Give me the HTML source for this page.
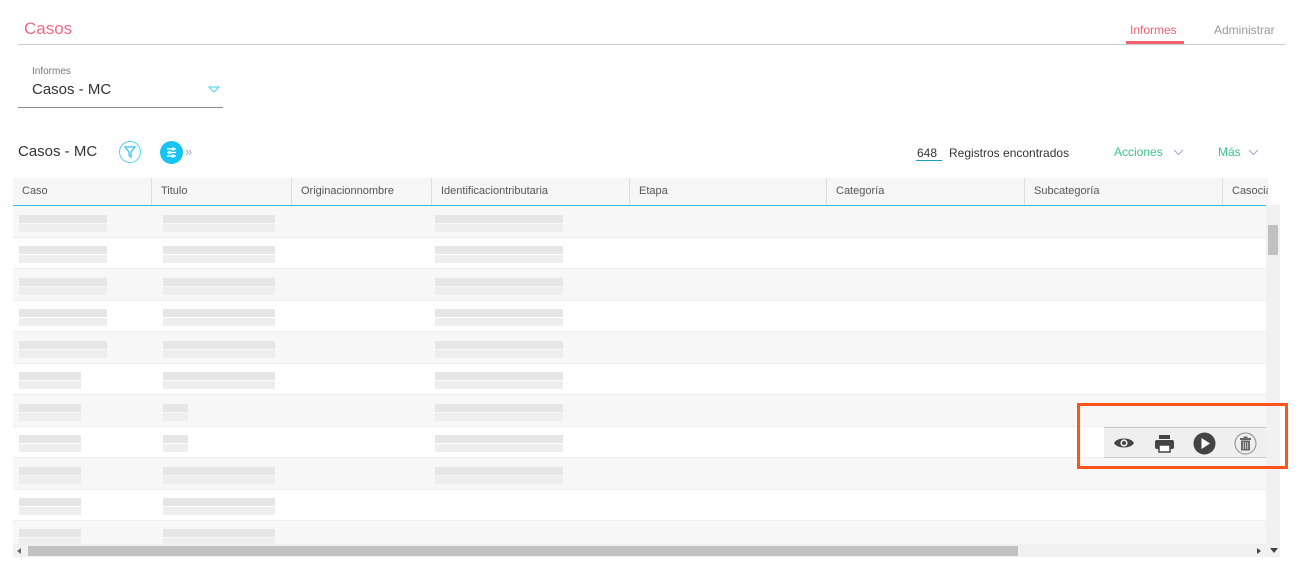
<!DOCTYPE html>
<html><head><meta charset="utf-8"><style>
*{box-sizing:border-box;margin:0;padding:0}
body{width:1313px;height:574px;background:#fff;font-family:"Liberation Sans",sans-serif;position:relative;overflow:hidden;color:#333}
.a{position:absolute}
.hd{position:absolute;top:178px;height:27px;font-size:11px;color:#555;padding:7px 0 0 9px;border-left:1px solid #ddd;background:#f6f6f6}
.row{position:absolute;left:13px;width:1253px;height:31.5px;border-bottom:1px solid #eee}
.bl{position:absolute;height:8px;background:#e6e6e6}
</style></head><body>
<div class="a" style="left:24px;top:19px;font-size:17px;color:#f06a8a">Casos</div>
<div class="a" style="left:18px;top:44px;width:1267px;height:1px;background:#ccc"></div>
<div class="a" style="left:1130px;top:23px;font-size:12px;color:#f0606e">Informes</div>
<div class="a" style="left:1126px;top:41px;width:58px;height:3px;background:#f0606e"></div>
<div class="a" style="left:1214px;top:23px;font-size:12px;color:#999">Administrar</div>

<div class="a" style="left:32px;top:66px;font-size:10px;color:#777">Informes</div>
<div class="a" style="left:32px;top:81px;font-size:15px;color:#333">Casos - MC</div>
<svg class="a" style="left:208px;top:86px" width="12" height="8" viewBox="0 0 12 8"><path d="M1 1h10L6 6z" fill="none" stroke="#4fd0f0" stroke-width="1"/></svg>
<div class="a" style="left:18px;top:107px;width:205px;height:1px;background:#888"></div>

<div class="a" style="left:18px;top:143px;font-size:15px;color:#333">Casos - MC</div>
<div class="a" style="left:119px;top:141px;width:22px;height:22px;border:1px solid #4fd0f0;border-radius:50%"></div>
<svg class="a" style="left:123px;top:145px" width="14" height="14" viewBox="0 0 14 14"><path d="M2 2h10L8 7v5L6 10V7z" fill="none" stroke="#2bc4ec" stroke-width="1.2"/></svg>
<div class="a" style="left:160px;top:141px;width:23px;height:23px;background:#16c3f2;border-radius:50%"></div>
<svg class="a" style="left:165px;top:146px" width="13" height="13" viewBox="0 0 13 13" stroke="#fff" stroke-width="1.2"><path d="M2 3h9M2 6.5h9M2 10h9"/><circle cx="8" cy="3" r="1" fill="#16c3f2"/><circle cx="4.5" cy="6.5" r="1" fill="#16c3f2"/><circle cx="8" cy="10" r="1" fill="#16c3f2"/></svg>
<div class="a" style="left:185px;top:144px;font-size:13px;color:#aaa">»</div>

<div class="a" style="left:917px;top:146px;font-size:12px;color:#333">648</div>
<div class="a" style="left:916px;top:160px;width:26px;height:1px;background:#1aa0c8"></div>
<div class="a" style="left:949px;top:146px;font-size:12px;color:#333">Registros encontrados</div>
<div class="a" style="left:1114px;top:145px;font-size:12px;color:#3cc48a">Acciones</div>
<svg class="a" style="left:1173px;top:149px" width="11" height="7" viewBox="0 0 11 7"><path d="M1 1l4.5 4.5L10 1" fill="none" stroke="#9ac" stroke-width="1"/></svg>
<div class="a" style="left:1218px;top:145px;font-size:12px;color:#3cc48a">Más</div>
<svg class="a" style="left:1248px;top:149px" width="11" height="7" viewBox="0 0 11 7"><path d="M1 1l4.5 4.5L10 1" fill="none" stroke="#9ac" stroke-width="1"/></svg>

<div class="hd" style="left:13px;width:138px;border-left:none">Caso</div>
<div class="hd" style="left:151px;width:140px">Titulo</div>
<div class="hd" style="left:291px;width:140px">Originacionnombre</div>
<div class="hd" style="left:431px;width:198px">Identificaciontributaria</div>
<div class="hd" style="left:629px;width:197px">Etapa</div>
<div class="hd" style="left:826px;width:198px">Categoría</div>
<div class="hd" style="left:1024px;width:198px">Subcategoría</div>
<div class="hd" style="left:1222px;width:46px;overflow:hidden;white-space:nowrap">Casociado</div>
<div class="a" style="left:13px;top:205px;width:1253px;height:1px;background:#26bde8"></div>

<div class="row" style="top:206px;background:#f7f7f7"></div>
<div class="row" style="top:237.5px;background:#fff"></div>
<div class="row" style="top:269px;background:#f7f7f7"></div>
<div class="row" style="top:300.5px;background:#fff"></div>
<div class="row" style="top:332px;background:#f7f7f7"></div>
<div class="row" style="top:363.5px;background:#fff"></div>
<div class="row" style="top:395px;background:#f7f7f7"></div>
<div class="row" style="top:426.5px;background:#fff"></div>
<div class="row" style="top:458px;background:#f7f7f7"></div>
<div class="row" style="top:489.5px;background:#fff"></div>
<div class="row" style="top:521px;background:#f7f7f7;height:24px"></div>

<div id="bl"></div>
<script>
var h='',tops=[215,246,278,309,341,372,404,435,467,498,529];
for(var i=0;i<tops.length;i++){var t=tops[i];
var w1=i>4?62:88,w2=i==6||i==7?25:112;
h+='<div class="bl" style="left:19px;top:'+t+'px;width:'+w1+'px"></div><div class="bl" style="left:19px;top:'+(t+9)+'px;width:'+w1+'px;background:#eeeeee"></div>';
h+='<div class="bl" style="left:163px;top:'+t+'px;width:'+w2+'px"></div><div class="bl" style="left:163px;top:'+(t+9)+'px;width:'+w2+'px;background:#eeeeee"></div>';
if(i<9)h+='<div class="bl" style="left:435px;top:'+t+'px;width:128px"></div><div class="bl" style="left:435px;top:'+(t+9)+'px;width:128px;background:#eeeeee"></div>';}
document.getElementById('bl').innerHTML=h;
</script>

<div class="a" style="left:1266px;top:205px;width:14px;height:340px;background:#f1f1f1"></div>
<div class="a" style="left:1268px;top:225px;width:10px;height:30px;background:#c1c1c1"></div>
<div class="a" style="left:13px;top:545px;width:1267px;height:12px;background:#f1f1f1"></div>
<div class="a" style="left:28px;top:546px;width:990px;height:10px;background:#c1c1c1"></div>
<div class="a" style="left:17px;top:548px;border-top:3px solid transparent;border-bottom:3px solid transparent;border-right:4px solid #666"></div>
<div class="a" style="left:1257px;top:548px;border-top:3px solid transparent;border-bottom:3px solid transparent;border-left:4px solid #444"></div>
<div class="a" style="left:1270px;top:548px;border-left:4px solid transparent;border-right:4px solid transparent;border-top:5px solid #444"></div>

<div class="a" style="left:1104px;top:427px;width:162px;height:31px;background:#efefef;border-top:1px solid #ccc;border-bottom:1px solid #ccc"></div>
<svg class="a" style="left:1113px;top:434px" width="22" height="18" viewBox="0 0 22 18"><path d="M1 9C4 3 18 3 21 9C18 15 4 15 1 9z" fill="#444"/><circle cx="11" cy="9" r="3.6" fill="#efefef"/><circle cx="11" cy="9" r="2" fill="#444"/></svg>
<svg class="a" style="left:1154px;top:434px" width="21" height="20" viewBox="0 0 21 20"><rect x="5" y="1" width="11" height="4" fill="#444"/><rect x="1" y="6" width="19" height="9" rx="2" fill="#444"/><rect x="5" y="11" width="11" height="7" fill="#fff" stroke="#444" stroke-width="1.5"/></svg>
<svg class="a" style="left:1193px;top:432px" width="23" height="23" viewBox="0 0 23 23"><circle cx="11.5" cy="11.5" r="11" fill="#444"/><path d="M8.5 6v11l8.5-5.5z" fill="#fff"/></svg>
<svg class="a" style="left:1234px;top:432px" width="23" height="23" viewBox="0 0 23 23"><circle cx="11.5" cy="11.5" r="10.5" fill="none" stroke="#888" stroke-width="1"/><rect x="6" y="6" width="11" height="2" fill="#666"/><rect x="9.5" y="4.5" width="4" height="2" fill="#666"/><rect x="7" y="8.5" width="9" height="10" fill="#666"/><path d="M9.3 10v7M11.5 10v7M13.7 10v7" stroke="#ddd" stroke-width="0.8"/></svg>
<div class="a" style="left:1077px;top:403px;width:211px;height:66px;border:3px solid #ff5418"></div>
</body></html>
